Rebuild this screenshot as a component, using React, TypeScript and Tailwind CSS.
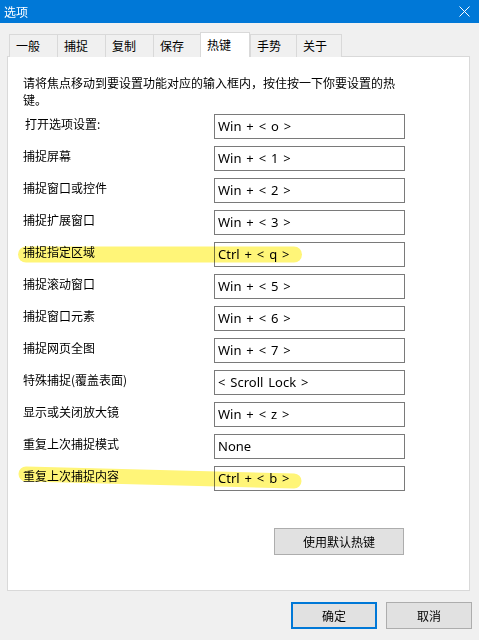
import React from "react";

const tabs = ["一般", "捕捉", "复制", "保存", "热键", "手势", "关于"];
const tabWidths = [48, 48, 48, 47, 50, 46, 46];

const rows: { label: string; key: string; mark?: "flat" | "slant" }[] = [
  { label: "打开选项设置:", key: "Win + < o >" },
  { label: "捕捉屏幕", key: "Win + < 1 >" },
  { label: "捕捉窗口或控件", key: "Win + < 2 >" },
  { label: "捕捉扩展窗口", key: "Win + < 3 >" },
  { label: "捕捉指定区域", key: "Ctrl + < q >", mark: "flat" },
  { label: "捕捉滚动窗口", key: "Win + < 5 >" },
  { label: "捕捉窗口元素", key: "Win + < 6 >" },
  { label: "捕捉网页全图", key: "Win + < 7 >" },
  { label: "特殊捕捉(覆盖表面)", key: "< Scroll Lock >" },
  { label: "显示或关闭放大镜", key: "Win + < z >" },
  { label: "重复上次捕捉模式", key: "None" },
  { label: "重复上次捕捉内容", key: "Ctrl + < b >", mark: "slant" },
];

const cjk = { fontFamily: '"Noto Sans CJK SC", "Noto Sans", sans-serif' };
const latin = { fontFamily: '"Noto Sans", "Noto Sans CJK SC", sans-serif', wordSpacing: "1.5px" };

// highlighter stroke drawn over the row
const Marker = ({ kind }: { kind: "flat" | "slant" }) => (
  <svg
    className="absolute -left-[8px] top-0 pointer-events-none mix-blend-multiply"
    width="320"
    height="26"
  >
    {kind === "flat" ? (
      <line x1="11" y1="12.5" x2="279" y2="12.5" stroke="#fff578" strokeWidth="16" strokeLinecap="round" />
    ) : (
      <line x1="11" y1="8" x2="279" y2="15" stroke="#fff578" strokeWidth="15" strokeLinecap="round" />
    )}
  </svg>
);

export default function App() {
  return (
    <div className="w-[479px] h-[640px] bg-[#f0f0f0] flex flex-col overflow-hidden" style={cjk}>
      {/* title bar */}
      <div className="h-[23px] bg-[#0078d7] flex items-center justify-between pl-[4px] pr-[9px]">
        <span className="text-[12px] text-white leading-none">选项</span>
        <svg width="11" height="11" viewBox="0 0 11 11">
          <path d="M0.5 0.5 L10.5 10.5 M10.5 0.5 L0.5 10.5" stroke="white" strokeWidth="1" />
        </svg>
      </div>

      {/* tabs */}
      <div className="flex items-end pl-[9px] mt-[9px] h-[25px] relative z-10">
        {tabs.map((t, i) => {
          const sel = t === "热键";
          return (
            <div
              key={t}
              style={{ width: tabWidths[i] }}
              className={
                sel
                  ? "h-[25px] bg-white border border-b-0 border-[#d9d9d9] text-[12px] text-black flex items-center pl-[6px] pb-[1px]"
                  : "h-[23px] bg-[#f0f0f0] border border-b-0 border-r-0 border-[#d9d9d9] text-[12px] text-black flex items-center pl-[6px] last:border-r"
              }
            >
              {t}
            </div>
          );
        })}
      </div>

      {/* panel */}
      <div className="mx-[7px] w-[463px] h-[535px] -mt-px bg-white border border-[#d9d9d9] flex flex-col pl-[15px]">
        <p className="text-[12px] leading-[17px] text-black mt-[17px] w-[380px]">
          请将焦点移动到要设置功能对应的输入框内，按住按一下你要设置的热键。
        </p>
        <div className="flex flex-col gap-[7px] mt-[6px]">
          {rows.map((r, i) => (
            <div key={r.label} className="relative flex items-start h-[25px]">
              <span
                className={
                  "text-[12px] text-black w-[191px] leading-[17px] mt-[1px] " +
                  (i === 0 ? "pl-[2px]" : "")
                }
              >
                {r.label}
              </span>
              <div
                className="w-[191px] h-[25px] border border-[#7a7a7a] flex items-center pl-[3px] text-[13px] text-black leading-none"
                style={latin}
              >
                {r.key}
              </div>
              {r.mark && <Marker kind={r.mark} />}
            </div>
          ))}
        </div>
        <div className="flex justify-end pr-[65px] mt-[37px]">
          <button className="w-[130px] h-[27px] bg-[#e1e1e1] border border-[#adadad] text-[12px] text-black">
            使用默认热键
          </button>
        </div>
      </div>

      {/* footer */}
      <div className="flex justify-end gap-[9px] pr-[7px] mt-[11px]">
        <button className="w-[86px] h-[27px] bg-[#e1e1e1] border-2 border-[#0078d7] text-[12px] text-black">
          确定
        </button>
        <button className="w-[86px] h-[27px] bg-[#e1e1e1] border border-[#adadad] text-[12px] text-black">
          取消
        </button>
      </div>
    </div>
  );
}
